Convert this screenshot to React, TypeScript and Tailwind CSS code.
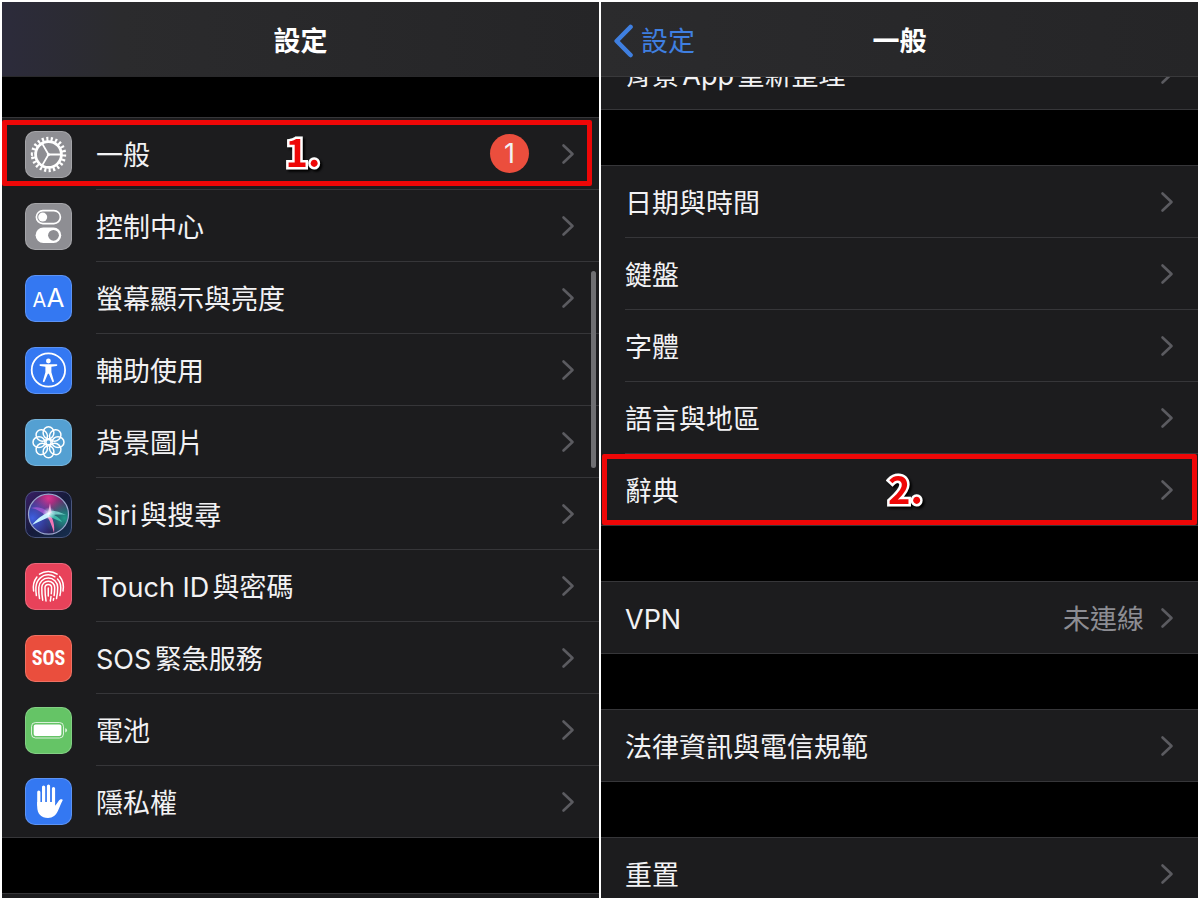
import React from 'react';

const petals = [0, 45, 90, 135, 180, 225, 270, 315];

function Chevron() {
  return (
    <svg className="shrink-0" width="14" height="22" viewBox="0 0 14 22" fill="none" aria-hidden="true">
      <path d="M2.5 2.5 11.5 11 2.5 19.5" stroke="#5b5b60" strokeWidth="2.6" strokeLinecap="round" strokeLinejoin="round" />
    </svg>
  );
}

function IconTile({ className, children }: { className: string; children: React.ReactNode }) {
  return (
    <span
      className={`flex size-[47px] shrink-0 items-center justify-center overflow-hidden rounded-[10px] text-white inset-ring inset-ring-white/20 ${className}`}
      aria-hidden="true"
    >
      {children}
    </span>
  );
}

function GearIcon() {
  return (
    <IconTile className="bg-[#8e8e93]">
      <svg viewBox="0 0 47 47" fill="none" stroke="currentColor">
        <circle cx="23.5" cy="23.5" r="15.6" strokeWidth="4.2" pathLength="44" strokeDasharray="0.95 1.05" />
        <circle cx="23.5" cy="23.5" r="12.9" strokeWidth="2.8" />
        <path d="M23.5 23.5H36M23.5 23.5 17.2 12.6M23.5 23.5 17.2 34.4" strokeWidth="1.8" />
        <circle cx="23.5" cy="23.5" r="1.6" fill="currentColor" stroke="none" />
      </svg>
    </IconTile>
  );
}

function ControlCenterIcon() {
  return (
    <IconTile className="bg-[#8e8e93]">
      <svg viewBox="0 0 47 47" fill="none">
        <rect x="11.4" y="7.6" width="24" height="13" rx="6.5" stroke="currentColor" strokeWidth="1.7" />
        <circle cx="17.7" cy="14.1" r="4.5" fill="currentColor" />
        <rect x="10.6" y="24.6" width="25.6" height="15.4" rx="7.7" fill="currentColor" />
        <circle cx="28.5" cy="32.3" r="5.4" fill="#8e8e93" />
      </svg>
    </IconTile>
  );
}

function DisplayIcon() {
  return (
    <IconTile className="bg-[#3478f2]">
      <span className="flex items-baseline leading-none">
        <span className="text-[20px]">A</span>
        <span className="text-[26px]">A</span>
      </span>
    </IconTile>
  );
}

function AccessibilityIcon() {
  return (
    <IconTile className="bg-[#3478f2]">
      <svg viewBox="0 0 47 47" fill="currentColor">
        <circle cx="23.4" cy="23" r="16.7" fill="none" stroke="currentColor" strokeWidth="1.8" />
        <circle cx="23.4" cy="14" r="2.4" />
        <path d="M15.3 17.3h16.2a.8.8 0 0 1 .1 1.6l-5.2.9v5.5l2.5 8.6a.9.9 0 0 1-1.7.6l-3.3-7.8h-1l-3.3 7.8a.9.9 0 0 1-1.7-.6l2.5-8.6v-5.5l-5.2-.9a.8.8 0 0 1 .1-1.6Z" />
      </svg>
    </IconTile>
  );
}

function WallpaperIcon() {
  return (
    <IconTile className="bg-[#54a0d2]">
      <svg viewBox="0 0 47 47" fill="none" stroke="currentColor" strokeWidth="1.5">
        {petals.map((angle) => (
          <ellipse key={angle} cx="23.5" cy="13.7" rx="5.4" ry="6" transform={`rotate(${angle} 23.5 23.2)`} />
        ))}
        <circle cx="23.5" cy="23.2" r="2.6" />
      </svg>
    </IconTile>
  );
}

function SiriIcon() {
  return (
    <IconTile className="bg-[#1c1a38]">
      <svg viewBox="0 0 47 47" fill="none">
        <defs>
          <linearGradient id="siri-tile" x1="0" y1="0" x2="1" y2="1">
            <stop offset="0" stopColor="#3a1f66" />
            <stop offset="0.5" stopColor="#151a3a" />
            <stop offset="1" stopColor="#16304f" />
          </linearGradient>
          <radialGradient id="siri-pink" cx="0.5" cy="0.1" r="0.55">
            <stop offset="0" stopColor="#d8348f" />
            <stop offset="1" stopColor="#d8348f" stopOpacity="0" />
          </radialGradient>
          <radialGradient id="siri-teal" cx="0.9" cy="0.6" r="0.5">
            <stop offset="0" stopColor="#1f9a88" />
            <stop offset="1" stopColor="#1f9a88" stopOpacity="0" />
          </radialGradient>
          <radialGradient id="siri-blue" cx="0.1" cy="0.6" r="0.6">
            <stop offset="0" stopColor="#3f5fe0" />
            <stop offset="1" stopColor="#3f5fe0" stopOpacity="0" />
          </radialGradient>
          <radialGradient id="siri-glow">
            <stop offset="0" stopColor="#fff" />
            <stop offset="1" stopColor="#bfe4ff" stopOpacity="0" />
          </radialGradient>
        </defs>
        <rect width="47" height="47" fill="url(#siri-tile)" />
        <rect x="0.5" y="0.5" width="46" height="46" rx="9.5" stroke="#4b567c" />
        <circle cx="23.5" cy="23.2" r="20" fill="#2a1d55" />
        <circle cx="23.5" cy="23.2" r="20" fill="url(#siri-pink)" />
        <circle cx="23.5" cy="23.2" r="20" fill="url(#siri-teal)" />
        <circle cx="23.5" cy="23.2" r="20" fill="url(#siri-blue)" />
        <path d="M24 20c3-1 10 0 17 4-7-1-12 0-15 0Z" fill="#7fe0d6" fillOpacity="0.8" />
        <path d="M23 22 25 12l1.500 10Z" fill="#f6a3dc" />
        <path d="M24 22C19 17 13 15 6 17c6 1 11 4 15 8Z" fill="#a659d6" fillOpacity="0.8" />
        <path d="M25 23c3 5 5 11 4 19-2-7-4-12-7-17Z" fill="#f277b5" />
        <path d="M25 21C18 23 12 28 7 34c6-3 13-6 19-9Z" fill="#c5f1ff" />
        <path d="M25 22c5 2 10 5 12 9-5-2-10-4-13-6Z" fill="#3fb9a8" />
        <circle cx="24" cy="22.5" r="6.5" fill="url(#siri-glow)" />
        <circle cx="23.5" cy="23.2" r="20" stroke="#9aa6cc" strokeWidth="1.2" />
      </svg>
    </IconTile>
  );
}

function TouchIdIcon() {
  return (
    <IconTile className="bg-[#e8425a]">
      <svg viewBox="0 0 47 47" fill="none" stroke="currentColor" strokeWidth="1.5" strokeLinecap="round">
        <path d="M14.5 11.2c2.500-1.700 5.500-2.700 8.800-2.700s6.300 1 8.800 2.700" />
        <path d="M8.600 28c-.8-5.200.3-10.300 3.300-14M34.700 13.400c3.300 3.900 4.300 9 3.300 14.600" />
        <path d="M11.400 32.500c-.5-2.800-.7-5.500-.5-8.300.5-7 5.700-12.400 12.400-12.400 2.500 0 4.700.7 6.600 2M32.500 16c2.200 2.400 3.300 5.300 3.300 8.700 0 2.700-.3 5.300-.9 7.800" />
        <path d="M14.500 35.500c-.6-3.700-.9-7.400-.7-11.200.3-5.300 4.400-9.200 9.500-9.200s9.400 4 9.400 9.400c0 3.800-.4 7.400-1.200 11" />
        <path d="M17.700 37.200c-.7-4.200-1-8.400-.9-12.700.1-3.600 2.900-6.200 6.500-6.200 3.700 0 6.400 2.700 6.400 6.300 0 2.700-.2 5.400-.6 8M28.700 35.500l-.4 1.700" />
        <path d="M21 38c-.7-4.400-1-8.800-1-13.200 0-2 1.400-3.300 3.300-3.300s3.300 1.300 3.300 3.300c0 2-.1 4-.3 6M26 33.500c-.2 1.500-.4 3-.7 4.500" />
        <path d="M23.300 25c0 2.700-.1 5.400 0 8" />
      </svg>
    </IconTile>
  );
}

function SosIcon() {
  return (
    <IconTile className="bg-[#ea4e3d]">
      <span className="font-['Liberation_Sans_Narrow','Roboto_Condensed',Roboto,sans-serif] text-[20px] leading-none font-bold">
        SOS
      </span>
    </IconTile>
  );
}

function BatteryIcon() {
  return (
    <IconTile className="bg-[#65c466]">
      <svg viewBox="0 0 47 47" fill="none">
        <rect x="6.5" y="15.5" width="32" height="15.5" rx="4" stroke="currentColor" strokeOpacity="0.75" strokeWidth="1" />
        <rect x="8.7" y="17.6" width="27.7" height="11.3" rx="2" fill="currentColor" />
        <path d="M40.2 21.2c1.3.4 1.9 1.1 1.9 2.1s-.6 1.7-1.9 2.1Z" fill="currentColor" fillOpacity="0.75" />
      </svg>
    </IconTile>
  );
}

function PrivacyIcon() {
  return (
    <IconTile className="bg-[#3478f2]">
      <svg viewBox="0 0 47 47" fill="none" stroke="currentColor" strokeLinecap="round">
        <path d="M13.800 14v13M18.600 9v16M23.500 8v16M28.500 10.500V25" strokeWidth="3.200" />
        <path
          d="M12.200 24h17.900v3.700c1.300-1.300 2.400-3 3.500-4.700.9-1.400 2.300-2 3.700-1.500.5.2.6.6.3 1.100-1.600 3-2.900 6.600-4.600 10.100-2 4.400-5.100 7.200-10 7.200-6.700 0-10.800-4.400-10.800-11Z"
          fill="currentColor"
          stroke="none"
        />
      </svg>
    </IconTile>
  );
}

interface RowProps {
  label: string;
  icon?: React.ReactNode;
  value?: string;
  badge?: number;
  children?: React.ReactNode;
}

function Row({ label, icon, value, badge, children }: RowProps) {
  return (
    <li className="group relative border-[#363639] last:border-b">
      <a href="#" className="flex h-18 items-stretch gap-6 pl-6 group-last:h-[71px]">
        {icon && <span className="-ml-px flex items-center">{icon}</span>}
        <span className="flex min-w-0 flex-1 items-center border-b border-[#363639] pr-6 group-last:border-b-0">
          <span className="flex-1 truncate pt-1">{label}</span>
          {value && <span className="mr-4 pt-1 text-[#8d8d93]">{value}</span>}
          {badge && (
            <span className="mr-8 flex size-[39px] items-center justify-center rounded-full bg-[#eb4e3d]">{badge}</span>
          )}
          <Chevron />
        </span>
      </a>
      {children}
    </li>
  );
}

function Group({ children }: { children: React.ReactNode }) {
  return <ul className="shrink-0 border-t border-[#363639] bg-[#1c1c1e]">{children}</ul>;
}

// Red frame with a step number, laid over a row
function Step({ number, className }: { number: number; className: string }) {
  return (
    <div
      className={`pointer-events-none absolute flex items-center justify-center rounded-xs border-5 border-[#ee0707] pb-1 pl-3 ${className}`}
    >
      <span className="font-['Noto_Sans_CJK_TC',sans-serif] text-[38px] leading-none font-bold text-[#ee0707] drop-shadow-[2px_2px_1px_black] [paint-order:stroke_fill] [-webkit-text-stroke:5px_white]">
        {number}.
      </span>
    </div>
  );
}

function SettingsPanel() {
  return (
    <section className="relative flex min-w-0 flex-col overflow-hidden bg-black">
      <header className="flex h-[75px] shrink-0 items-center justify-center border-b border-[#29292b] bg-linear-to-r from-[#2c2b3b] via-[#2b2b2d] via-20% to-[#252527] pt-1">
        <h1 className="pt-0.5 font-bold text-white">設定</h1>
      </header>
      <div className="flex flex-col gap-[55px] pt-10">
        <Group>
          <Row label="一般" icon={<GearIcon />} badge={1}>
            <Step number={1} className="top-0.5 right-[7px] bottom-1 left-0" />
          </Row>
          <Row label="控制中心" icon={<ControlCenterIcon />} />
          <Row label="螢幕顯示與亮度" icon={<DisplayIcon />} />
          <Row label="輔助使用" icon={<AccessibilityIcon />} />
          <Row label="背景圖片" icon={<WallpaperIcon />} />
          <Row label="Siri與搜尋" icon={<SiriIcon />} />
          <Row label="Touch ID與密碼" icon={<TouchIdIcon />} />
          <Row label="SOS緊急服務" icon={<SosIcon />} />
          <Row label="電池" icon={<BatteryIcon />} />
          <Row label="隱私權" icon={<PrivacyIcon />} />
        </Group>
        <div className="h-18 border-t border-[#363639] bg-[#1c1c1e]" />
      </div>
      <div className="absolute top-[30%] right-[3px] h-[22%] w-[5px] rounded-full bg-[#707073]" />
    </section>
  );
}

function GeneralPanel() {
  return (
    <section className="flex min-w-0 flex-col overflow-hidden bg-black">
      <header className="relative z-10 grid h-[75px] shrink-0 grid-cols-3 items-center border-b border-[#39393b] bg-linear-to-r from-[#2b2b2d] to-[#252527] pt-1">
        <a href="#" className="flex items-center gap-2 pl-3 text-[#3f7fe0]">
          <svg width="20" height="34" viewBox="0 0 20 34" fill="none" aria-hidden="true">
            <path d="M17.500 3 3.700 17l13.800 14" stroke="currentColor" strokeWidth="4.600" strokeLinecap="round" strokeLinejoin="round" />
          </svg>
          <span className="pt-0.5">設定</span>
        </a>
        <h1 className="pt-0.5 text-center font-bold text-white">一般</h1>
      </header>
      <div className="-mt-10 flex flex-col gap-[55px]">
        <Group>
          <Row label="背景App重新整理" />
        </Group>
        <Group>
          <Row label="日期與時間" />
          <Row label="鍵盤" />
          <Row label="字體" />
          <Row label="語言與地區" />
          <Row label="辭典">
            <Step number={2} className="inset-x-px top-0 bottom-0" />
          </Row>
        </Group>
        <Group>
          <Row label="VPN" value="未連線" />
        </Group>
        <Group>
          <Row label="法律資訊與電信規範" />
        </Group>
        <Group>
          <Row label="重置" />
        </Group>
      </div>
    </section>
  );
}

export default function App() {
  return (
    <main
      lang="zh-Hant"
      className="grid h-screen grid-cols-2 gap-0.5 bg-white p-0.5 font-[Inter,'Noto_Sans_CJK_TC',sans-serif] text-[27px] leading-9 text-[#f2f2f4] [text-autospace:normal]"
    >
      <SettingsPanel />
      <GeneralPanel />
    </main>
  );
}
